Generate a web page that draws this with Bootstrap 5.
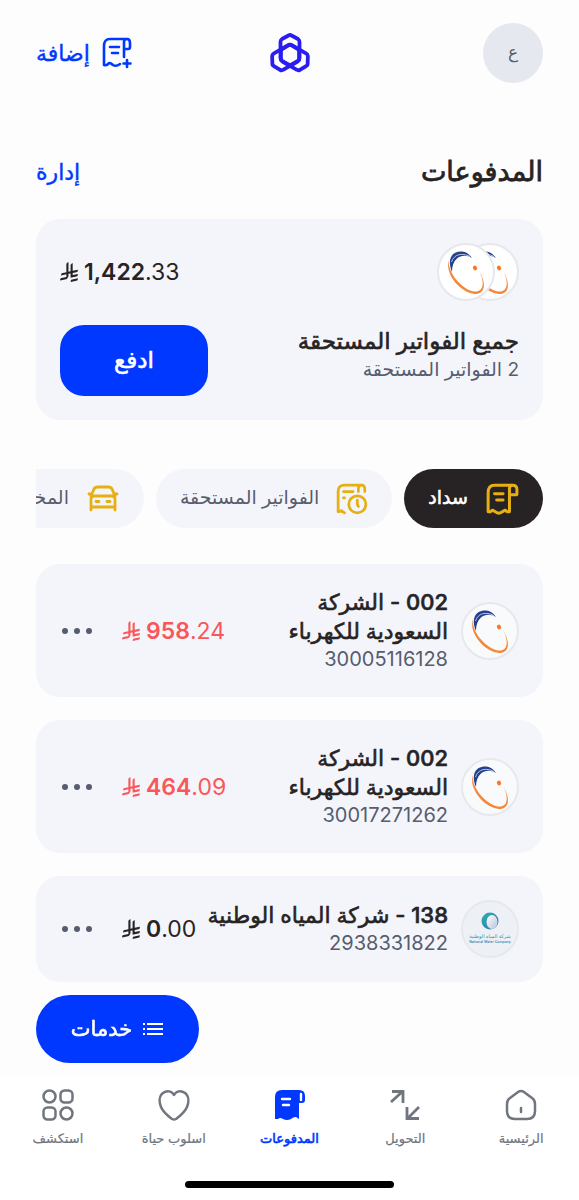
<!DOCTYPE html>
<html lang="ar" dir="rtl">
<head>
<meta charset="utf-8">
<meta name="viewport" content="width=device-width, initial-scale=1">
<title>المدفوعات</title>
<link href="https://cdn.jsdelivr.net/npm/bootstrap@5.3.0/dist/css/bootstrap.min.css" rel="stylesheet">
<style>
  :root {
    --brand: #0038ff;
    --ink: #272324;
    --muted: #565d6e;
    --panel: #f4f5fa;
    --gold: #e6b012;
    --due: #f9575a;
  }
  body {
    font-family: Inter, "DejaVu Sans", sans-serif;
    color: var(--ink);
    background: #fdfdfe;
  }
  svg { display: block; flex: none; }
  a { text-decoration: none; }
  /* semi-bold Arabic: the regular cut with a thin outline in the text colour */
  .semi { font-weight: 500; -webkit-text-stroke: 0.6px currentColor; }
  .page { padding: 23px 36px 220px; }
  .avatar { width: 60px; height: 60px; background: #e6e8f0; color: var(--muted); font-size: 17px; border: 0; }
  .top-link { color: var(--brand); font-size: 22px; line-height: 32px; gap: 12px; }
  .top-link.semi { -webkit-text-stroke-width: 0.4px; }
  .page-title { font-size: 27px; line-height: 36px; margin: 0; }
  .page-title.semi { -webkit-text-stroke-width: 0.8px; }
  .title-row { margin-top: 71px; }
  .panel { background: var(--panel); border-radius: 24px; padding: 24px; }
  .summary { margin-top: 29px; }
  .logo-disc { width: 58px; height: 58px; border-radius: 50%; background: #f9fafc; border: 2px solid #e6e8ed; flex: none; overflow: hidden; }
  .logo-disc.on-white { background: #fff; }
  .logo-disc.water { background: #edf1f5; }
  .logo-disc + .logo-disc { margin-right: -34px; z-index: 1; }
  .item-title { font-size: 22px; line-height: 29px; margin: 0; }
  .summary .item-title { font-size: 23px; }
  .summary-text { padding-top: 2px; }
  .item-sub { font-size: 20px; line-height: 27px; margin: 0; color: var(--muted); }
  .item-sub.words { font-size: 19px; }
  .amount { font-size: 23px; line-height: 32px; color: var(--ink); white-space: nowrap; gap: 6px; }
  .amount.due { color: var(--due); }
  .amount b { font-weight: 600; }
  .btn-brand { --bs-btn-bg: var(--brand); --bs-btn-color: #fff; --bs-btn-hover-bg: #0030dd; --bs-btn-hover-color: #fff; --bs-btn-active-bg: #002bc4; --bs-btn-active-color: #fff; }
  .pay { width: 148px; height: 71px; border-radius: 24px; font-size: 23px; }
  .chips { margin-top: 49px; gap: 12px; overflow-x: auto; scrollbar-width: none; }
  .chips::-webkit-scrollbar { display: none; }
  .chip { height: 59px; padding: 0 24px; gap: 17px; border: 0; border-radius: 30px; background: var(--panel); color: var(--muted); font-size: 19px; white-space: nowrap; flex: none; }
  .chip svg { color: var(--gold); }
  .chip.on { background: var(--ink); color: #fff; }
  .bills { margin-top: 36px; gap: 23px; }
  .bill { gap: 8px; }
  .bill-text { margin-right: 5px; }
  .more { border: 0; background: none; padding: 0; color: var(--muted); margin-right: 20px; }
  .services { position: absolute; bottom: 100%; left: 36px; margin-bottom: 13px; width: 163px; height: 68px; border-radius: 34px; font-size: 21px; gap: 10px; }
  .tabs { background: #fff; padding: 13px 0 12px; }
  .tab { color: #70757f; font-size: 13px; line-height: 20px; gap: 7px; flex: 1 1 0; -webkit-text-stroke: 0.2px currentColor; }
  .tab.on { color: var(--brand); -webkit-text-stroke-width: 0.6px; }
  .home-bar { width: 36%; height: 7px; border-radius: 4px; background: #000; margin: 33px auto 0; }
</style>
</head>
<body>

<svg width="0" height="0" class="position-absolute" aria-hidden="true">
  <symbol id="riyal" viewBox="0 0 1124.14 1256.39">
    <path fill="currentColor" d="M699.62 1113.02c-20.06 44.48-33.32 92.75-38.4 143.37l424.51-90.24c20.06-44.47 33.31-92.75 38.4-143.37l-424.51 90.24ZM1085.73 895.8c20.06-44.47 33.32-92.75 38.4-143.37l-330.68 70.33v-135.2l292.27-62.11c20.06-44.47 33.32-92.75 38.4-143.37l-330.68 70.27V66.13c-50.67 28.45-95.67 66.32-132.25 110.99v403.35l-132.25 28.11V0c-50.67 28.44-95.67 66.32-132.25 110.99v525.69l-295.91 62.88c-20.06 44.47-33.33 92.75-38.42 143.37l334.33-71.05v170.26l-358.3 76.14c-20.06 44.47-33.32 92.75-38.4 143.37l375.04-79.7c30.53-6.35 56.77-24.4 73.83-49.24l68.78-101.97c7.14-10.55 11.3-23.27 11.3-36.99v-149.98l132.25-28.11v270.4l424.53-90.28Z"/>
  </symbol>
  <symbol id="electric" viewBox="2 2 54 54">
    <path fill="#f5873a" d="M12 17C10 30 26 47 37 48.500C47 49.500 48 39 42 28C50 41 48 51 38 51C24 50 7 31 12 17Z"/>
    <path fill="#24408e" d="M15 29C10 17 14 8 25 8.500C30 9 33 12 35 15C30 12 24 12 20 15.500C16.500 18.500 15 23 15 29Z"/>
    <path fill="none" stroke="#f9fafc" stroke-width=".7" d="M14.500 19C17 11 25 9.500 33 13.500"/>
    <ellipse cx="38" cy="25" rx="2" ry="2.400" transform="rotate(-35 38 25)" fill="#f47a2c"/>
  </symbol>
  <symbol id="receipt" viewBox="0 0 30 30">
    <g fill="none" stroke="currentColor" stroke-width="2.800" stroke-linecap="round" stroke-linejoin="round">
      <path d="M24 2H8Q2 2 2 9V27H4L6 25.500L9 27Q12 29.500 15 27L18 25.500L20 27H22V5Q22 2 25 2Q29 2 29 6V10Q29 11 28 11H22"/>
      <path d="M8 10H16M10 16H16"/>
    </g>
  </symbol>
</svg>

<main class="page">
  <header class="d-flex align-items-center justify-content-between position-relative">
    <button class="avatar rounded-circle" type="button" aria-label="الحساب">ع</button>
    <svg class="position-absolute top-50 start-50 translate-middle" width="42" height="42" viewBox="-21 -23 42 42" fill="none" stroke="#2a1df0" stroke-width="3.800" stroke-linejoin="round" aria-hidden="true">
      <path id="knot" d="M-1.500-19.500Q0-20.500 1.500-19.500L8-16Q9.500-15 9.500-13V3Q9.500 5 8 6L0 10.500-8 6Q-9.500 5-9.500 3V-13Q-9.500-15-8-16Z"/>
      <use href="#knot" transform="rotate(120)"/>
      <use href="#knot" transform="rotate(240)"/>
    </svg>
    <a class="top-link semi d-flex align-items-center" href="#add">
      <svg width="30" height="32" viewBox="0 0 30 32" fill="none" stroke="currentColor" stroke-width="2.600" stroke-linecap="round" stroke-linejoin="round" aria-hidden="true">
        <path d="M24 2H8Q2 2 2 9V28Q5 29 7 26Q9 26 11 28Q14 30 18 27M22 20V5Q22 2 25 2Q28 2 28 6V10Q28 12 26 12H22M8 10H17M10 16H16M25 23V30M21.500 26.500H28.500"/>
      </svg>
      إضافة
    </a>
  </header>

  <div class="title-row d-flex align-items-center justify-content-between">
    <h1 class="page-title semi">المدفوعات</h1>
    <a class="top-link semi" href="#manage">إدارة</a>
  </div>

  <section class="panel summary">
    <div class="d-flex align-items-center justify-content-between">
      <div class="d-flex">
        <div class="logo-disc on-white"><svg width="54" height="54" aria-hidden="true"><use href="#electric"/></svg></div>
        <div class="logo-disc on-white"><svg width="54" height="54" aria-hidden="true"><use href="#electric"/></svg></div>
      </div>
      <div class="amount d-flex align-items-center" dir="ltr"><svg width="18" height="20" aria-label="ريال"><use href="#riyal"/></svg><span><b>1,422</b>.33</span></div>
    </div>
    <div class="d-flex justify-content-between mt-4">
      <div class="summary-text">
        <h2 class="item-title semi">جميع الفواتير المستحقة</h2>
        <p class="item-sub words">2 الفواتير المستحقة</p>
      </div>
      <button class="btn btn-brand pay semi" type="button">ادفع</button>
    </div>
  </section>

  <nav class="chips d-flex" aria-label="أنواع المدفوعات">
    <button class="chip on semi d-flex align-items-center" type="button">
      <svg width="34" height="32" aria-hidden="true"><use href="#receipt"/></svg>سداد
    </button>
    <button class="chip d-flex align-items-center" type="button">
      <svg width="32" height="32" viewBox="0 0 30 30" fill="none" stroke="currentColor" stroke-width="2.600" stroke-linecap="round" stroke-linejoin="round" aria-hidden="true">
        <path d="M23 2H8Q2 2 2 8V27L5 26L8 28M21 8V5Q21 2 24 2Q27 2 27 6V8M7 8H16M7 14H8"/><circle cx="20" cy="20" r="8"/><path d="M20 16V20L21 22"/>
      </svg>الفواتير المستحقة
    </button>
    <button class="chip d-flex align-items-center" type="button">
      <svg width="34" height="32" viewBox="0 0 34 32" fill="none" stroke="currentColor" stroke-width="2.800" stroke-linecap="round" stroke-linejoin="round" aria-hidden="true">
        <path d="M5 13L8 6Q9 4 12 4H22Q25 4 26 6L29 13M3 11H6M28 11H31M8 13H26Q29 13 29 16V27M5 27V16Q5 13 8 13M5 24H29M10 18.500H13M21 18.500H24"/>
      </svg>المخالفات
    </button>
  </nav>

  <section class="bills d-flex flex-column">
    <article class="panel bill d-flex align-items-center">
      <div class="logo-disc"><svg width="54" height="54" aria-hidden="true"><use href="#electric"/></svg></div>
      <div class="bill-text flex-fill">
        <h2 class="item-title semi">002 - الشركة السعودية للكهرباء</h2>
        <p class="item-sub">30005116128</p>
      </div>
      <div class="amount due d-flex align-items-center" dir="ltr"><svg width="18" height="20" aria-label="ريال"><use href="#riyal"/></svg><span><b>958</b>.24</span></div>
      <button class="more" type="button" aria-label="المزيد"><svg width="34" height="8" viewBox="0 0 34 8" fill="currentColor"><circle cx="5" cy="4" r="3"/><circle cx="17" cy="4" r="3"/><circle cx="29" cy="4" r="3"/></svg></button>
    </article>
    <article class="panel bill d-flex align-items-center">
      <div class="logo-disc"><svg width="54" height="54" aria-hidden="true"><use href="#electric"/></svg></div>
      <div class="bill-text flex-fill">
        <h2 class="item-title semi">002 - الشركة السعودية للكهرباء</h2>
        <p class="item-sub">30017271262</p>
      </div>
      <div class="amount due d-flex align-items-center" dir="ltr"><svg width="18" height="20" aria-label="ريال"><use href="#riyal"/></svg><span><b>464</b>.09</span></div>
      <button class="more" type="button" aria-label="المزيد"><svg width="34" height="8" viewBox="0 0 34 8" fill="currentColor"><circle cx="5" cy="4" r="3"/><circle cx="17" cy="4" r="3"/><circle cx="29" cy="4" r="3"/></svg></button>
    </article>
    <article class="panel bill d-flex align-items-center">
      <div class="logo-disc water">
        <svg width="54" height="54" viewBox="0 0 54 54" aria-hidden="true">
          <defs><linearGradient id="drop" x1="0" y1="0" x2="1" y2="1"><stop offset="0" stop-color="#2fb5b0"/><stop offset="1" stop-color="#2b6fae"/></linearGradient>
          <linearGradient id="pearl" x1="0" y1="0" x2="1" y2="1"><stop offset="0" stop-color="#fff"/><stop offset="1" stop-color="#b9c3dd"/></linearGradient></defs>
          <circle cx="27" cy="19" r="8.500" fill="url(#drop)"/><ellipse cx="29" cy="20" rx="5.500" ry="7" fill="url(#pearl)"/>
          <g text-anchor="middle" font-weight="500" direction="ltr"><text x="27" y="36" font-size="5" fill="#2b93ad" direction="rtl">شركة المياه الوطنية</text><text x="27" y="41" font-size="3.500" fill="#2a78ad">National Water Company</text></g>
        </svg>
      </div>
      <div class="bill-text flex-fill">
        <h2 class="item-title semi">138 - شركة المياه الوطنية</h2>
        <p class="item-sub">2938331822</p>
      </div>
      <div class="amount d-flex align-items-center" dir="ltr"><svg width="18" height="20" aria-label="ريال"><use href="#riyal"/></svg><span><b>0</b>.00</span></div>
      <button class="more" type="button" aria-label="المزيد"><svg width="34" height="8" viewBox="0 0 34 8" fill="currentColor"><circle cx="5" cy="4" r="3"/><circle cx="17" cy="4" r="3"/><circle cx="29" cy="4" r="3"/></svg></button>
    </article>
  </section>
</main>

<footer class="fixed-bottom tabs">
  <button class="btn btn-brand services semi d-flex align-items-center justify-content-center" type="button">
    <svg width="22" height="16" viewBox="0 0 22 16" fill="none" stroke="currentColor" stroke-width="2" aria-hidden="true"><path d="M5 3H21M5 8H21M5 13H21M1 3H3M1 8H3M1 13H3"/></svg>خدمات
  </button>
  <nav class="d-flex" aria-label="التنقل">
    <a class="tab d-flex flex-column align-items-center" href="#home">
      <svg width="32" height="32" viewBox="0 0 32 32" fill="none" stroke="currentColor" stroke-width="2.500" stroke-linecap="round" stroke-linejoin="round" aria-hidden="true"><path d="M13 3Q16 1 19 3L27 9Q30 11 30 15V22Q30 30 22 30H10Q2 30 2 22V15Q2 11 5 9ZM16 19V23"/></svg>الرئيسية
    </a>
    <a class="tab d-flex flex-column align-items-center" href="#transfer">
      <svg width="32" height="32" viewBox="0 0 32 32" fill="none" stroke="currentColor" stroke-width="2.800" aria-hidden="true"><path d="M2 13 13 3M3 2.500H14V14M30 18 19 29M18 18V29.500H30"/></svg>التحويل
    </a>
    <a class="tab on d-flex flex-column align-items-center" href="#payments" aria-current="page">
      <svg width="32" height="32" viewBox="0 0 32 32" aria-hidden="true"><path fill="currentColor" d="M8 1H25Q31 1 31 7V11Q31 14 28 14H25V30L22 28Q19 28 17 30Q13 32 9 30Q6 28 4 30H1V8Q1 1 8 1Z"/><path d="M8 10H16M9 16H15M27 5V11" fill="none" stroke="#fff" stroke-width="2.400" stroke-linecap="round"/></svg>المدفوعات
    </a>
    <a class="tab d-flex flex-column align-items-center" href="#lifestyle">
      <svg width="32" height="32" viewBox="0 0 32 32" fill="none" stroke="currentColor" stroke-width="2.500" stroke-linejoin="round" aria-hidden="true"><path d="M16 6C18 2 23 1 27 4C31 7 31 13 29 18C27 23 22 27 18 30Q16 31 14 30C10 27 5 23 3 18C1 13 1 7 5 4C9 1 14 2 16 6Z"/></svg>اسلوب حياة
    </a>
    <a class="tab d-flex flex-column align-items-center" href="#explore">
      <svg width="32" height="32" viewBox="0 0 32 32" fill="none" stroke="currentColor" stroke-width="2.500" aria-hidden="true"><circle cx="7.500" cy="7.500" r="6"/><rect x="18.500" y="1.500" width="12" height="12" rx="4"/><rect x="1.500" y="18.500" width="12" height="12" rx="4"/><circle cx="24.500" cy="24.500" r="6"/></svg>استكشف
    </a>
  </nav>
  <div class="home-bar"></div>
</footer>

<script src="https://cdn.jsdelivr.net/npm/bootstrap@5.3.0/dist/js/bootstrap.bundle.min.js"></script>
</body>
</html>
